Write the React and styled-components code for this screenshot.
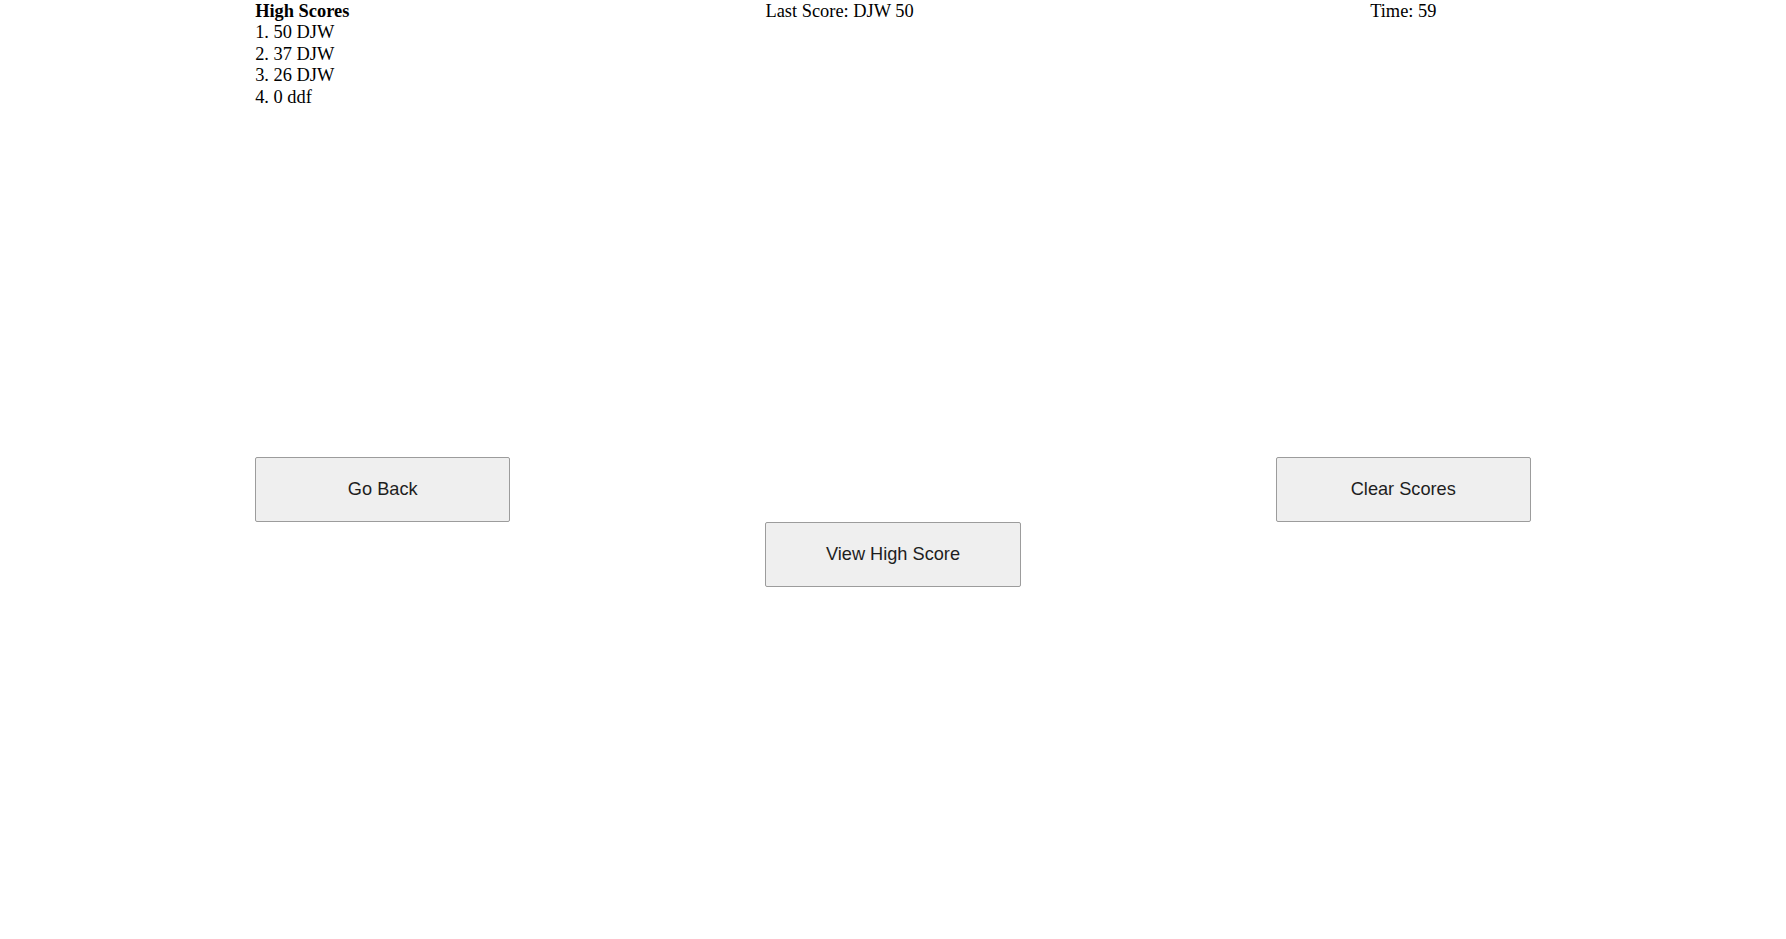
import React from "react";
import styled, { createGlobalStyle } from "styled-components";

const GlobalStyle = createGlobalStyle`
  html, body {
    margin: 0;
    padding: 0;
    background: #fff;
  }
  body {
    font-family: "Liberation Serif", "Times New Roman", serif;
    font-size: 18.4px;
    line-height: 21.4px;
    color: #000;
  }
`;

const scores = [
  { points: 50, name: "DJW" },
  { points: 37, name: "DJW" },
  { points: 26, name: "DJW" },
  { points: 0, name: "ddf" },
];

const App = () => (
  <Page>
    <GlobalStyle />
    <Header>
      <ScoreList>
        <strong>High Scores</strong>
        {scores.map((s, i) => (
          <div key={i}>
            {i + 1}. {s.points} {s.name}
          </div>
        ))}
      </ScoreList>
      <Info col={3}>Last Score: DJW 50</Info>
      <Info col={5} center>
        Time: 59
      </Info>
    </Header>
    <Controls>
      <Button col={1} row={1}>Go Back</Button>
      <Button col={5} row={1}>Clear Scores</Button>
      <Button col={3} row={2}>View High Score</Button>
    </Controls>
  </Page>
);

export default App;

const Page = styled.div`
  width: 100%;
  min-height: 100vh;
`;

const Header = styled.header`
  display: grid;
  grid-template-columns: repeat(7, 1fr);
  align-items: start;
  padding-top: 1px;
`;

const ScoreList = styled.div`
  grid-column: 2;
  white-space: nowrap;
  strong {
    display: block;
    font-weight: bold;
  }
`;

const Info = styled.div`
  grid-column: ${(p) => p.col + 1};
  text-align: ${(p) => (p.center ? "center" : "left")};
  white-space: nowrap;
`;

const Controls = styled.div`
  display: grid;
  grid-template-columns: repeat(7, 1fr);
  grid-auto-rows: 65px;
  margin-top: 348.5px;
`;

const Button = styled.button`
  grid-column: ${(p) => p.col + 1};
  grid-row: ${(p) => p.row};
  height: 65px;
  margin: 0;
  background: #efefef;
  border: 1px solid #9c9c9c;
  border-radius: 2px;
  font-family: "Liberation Sans", Arial, sans-serif;
  font-size: 18.2px;
  color: #1e1e1e;
  cursor: pointer;
`;
